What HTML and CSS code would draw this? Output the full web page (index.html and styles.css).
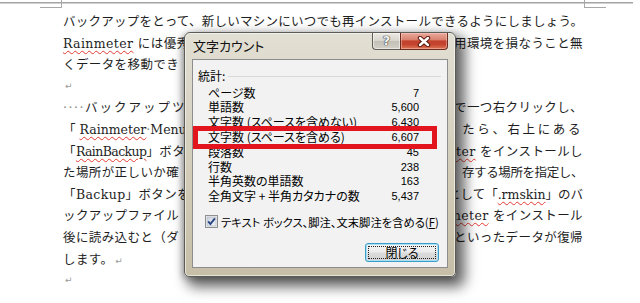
FILE: index.html
```html
<!DOCTYPE html>
<html lang="ja">
<head>
<meta charset="utf-8">
<title>文字カウント</title>
<link rel="stylesheet" href="styles.css">
</head>
<body>
<div class="page">
  <div class="top"><span class="mark mark-l"></span><span class="mark mark-r"></span></div>
  <div class="doc">
    <p class="ln full">バックアップをとって、新しいマシンにいつでも再インストールできるようにしましょう。</p>
    <p class="ln"><span><span class="sp">Rainmeter</span> には優秀</span><span>用環境を損なうこと無</span></p>
    <p class="ln"><span>くデータを移動でき</span></p>
    <p class="ln"><span class="pm">↵</span></p>
    <p class="ln"><span><span class="dots">····</span><span class="wide">バックアップツ</span></span><span>で一つ右クリックし、</span></p>
    <p class="ln"><span class="plain">「 <span class="sp">Rainmeter</span><span class="mk">·</span>Menu</span><span class="wider">たら、右上にある</span></p>
    <p class="ln"><span>「<span class="sp narrow">RainBackup</span>」ボタ</span><span><span class="sp">eter</span> をインストールし</span></p>
    <p class="ln"><span>た場所が正しいか確</span><span class="tight">存する場所を指定し、</span></p>
    <p class="ln"><span>「Backup」ボタンを</span><span class="plain">として「<span class="sp">.rmskin</span>」のバ</span></p>
    <p class="ln"><span>ックアップファイル</span><span><span class="sp">meter</span> をインストール</span></p>
    <p class="ln"><span>後に読み込むと（ダ</span><span>といったデータが復帰</span></p>
    <p class="ln"><span>します。<span class="pm">↵</span></span></p>
    <p class="ln"><span class="pm">↵</span></p>
  </div>

  <div class="dlg">
    <div class="dlg-title">
      <span class="dlg-caption">文字カウント</span>
      <div class="caps">
        <span class="cap help">?</span>
        <span class="cap close"><svg width="14" height="11" viewBox="0 0 14 11"><path d="M3 2 L11 9 M11 2 L3 9" stroke="#5a1a10" stroke-width="4.4" stroke-linecap="round"/><path d="M3 2 L11 9 M11 2 L3 9" stroke="#ffffff" stroke-width="2.4" stroke-linecap="round"/></svg></span>
      </div>
    </div>
    <div class="dlg-body">
      <div class="grp"><span>統計:</span><span class="grp-line"></span></div>
      <dl class="stats">
        <div class="row"><dt>ページ数</dt><dd>7</dd></div>
        <div class="row"><dt>単語数</dt><dd>5,600</dd></div>
        <div class="row"><dt>文字数 (スペースを含めない)</dt><dd>6,430</dd></div>
        <div class="row"><dt>文字数 (スペースを含める)</dt><dd>6,607</dd></div>
        <div class="row"><dt>段落数</dt><dd>45</dd></div>
        <div class="row"><dt>行数</dt><dd>238</dd></div>
        <div class="row"><dt>半角英数の単語数</dt><dd>163</dd></div>
        <div class="row"><dt>全角文字 + 半角カタカナの数</dt><dd>5,437</dd></div>
      </dl>
      <div class="chk">
        <span class="box"><svg width="13" height="13" viewBox="0 0 13 13"><defs><linearGradient id="cg" x1="0" y1="0" x2="1" y2="1"><stop offset="0" stop-color="#c9d2de"/><stop offset="1" stop-color="#f4f6f9"/></linearGradient></defs><rect x="0.5" y="0.5" width="12" height="12" fill="#f6f6f6" stroke="#8e8f8f"/><rect x="2" y="2" width="9" height="9" fill="url(#cg)" stroke="#b3bac4" stroke-width="0.8"/><path d="M3.2 6.4 L5.4 9 L9.9 3.3" fill="none" stroke="#2a4583" stroke-width="1.9"/></svg></span>
        <span>テキスト ボックス、脚注、文末脚注を含める(<u>F</u>)</span>
      </div>
      <div class="btns"><button class="btn" type="button">閉じる</button></div>
      <div class="hl"></div>
    </div>
  </div>
</div>
</body>
</html>
```
FILE: styles.css
```css
html, body {
  margin: 0;
  padding: 0;
  background: #ffffff;
}

.page {
  position: relative;
  width: 640px;
  height: 303px;
  overflow: hidden;
  background: #ffffff;
}

.top {
  display: flex;
  justify-content: space-between;
  height: 11px;
  padding: 0 34px 0 40px;
  box-sizing: border-box;
  background: linear-gradient(#a4a4a4, #a4a4a4) 0 2px / 633px 1px no-repeat,
              linear-gradient(#d0d0d0, #d0d0d0) 0 3px / 633px 1px no-repeat;
}

.mark {
  width: 22px;
  height: 8px;
  box-sizing: border-box;
  border-bottom: 1px solid #a8a8a8;
}

.mark-l { border-right: 1px solid #a8a8a8; }
.mark-r { border-left: 1px solid #a8a8a8; }

.doc {
  padding: 0 57px 0 63px;
  font-family: "DejaVu Serif", "Noto Sans CJK JP", serif;
  font-size: 12.5px;
  letter-spacing: 0.4px;
  color: #1e1e1e;
}

.ln {
  display: flex;
  justify-content: space-between;
  margin: 0;
  height: 21.6px;
  line-height: 21.6px;
  white-space: nowrap;
}

.ln.full {
  display: block;
  letter-spacing: 0;
  text-align: justify;
  text-align-last: justify;
  text-justify: inter-character;
  white-space: normal;
  overflow: hidden;
}

.wide { letter-spacing: 2px; }
.wider { letter-spacing: 2.6px; }
.tight { letter-spacing: -0.4px; }
.plain { letter-spacing: 0; }
.narrow { letter-spacing: -0.6px; }

.sp {
  text-decoration: underline wavy #e23a30;
  text-decoration-thickness: 1px;
  text-underline-offset: 2px;
}

.pm {
  font-family: "DejaVu Sans", sans-serif;
  font-size: 9px;
  letter-spacing: 0;
  color: #9a9a9a;
  margin-left: 2px;
}

.dots {
  display: inline-block;
  width: 22px;
  color: #8a8a8a;
  letter-spacing: 1.5px;
}

.mk {
  color: #8a8a8a;
}

/* dialog */
.dlg {
  position: absolute;
  left: 184px;
  top: 32px;
  width: 272px;
  box-sizing: border-box;
  padding: 0 7px 8px;
  border: 1px solid #5d5b55;
  border-radius: 6px 6px 5px 5px;
  background: linear-gradient(180deg, #e2dfd4 0%, #d9d4c5 30%, #cfc8b3 70%, #c6bea6 100%);
  box-shadow: inset 0 0 0 1px rgba(255, 255, 255, 0.55),
              6px 7px 13px 3px rgba(0, 0, 0, 0.6),
              -2px 2px 6px rgba(0, 0, 0, 0.25);
  font-family: "Noto Sans CJK JP", sans-serif;
  font-feature-settings: "palt";
  color: #000;
}

.dlg-title {
  display: flex;
  justify-content: space-between;
  align-items: flex-start;
  height: 26px;
}

.dlg-caption {
  font-size: 13px;
  line-height: 26px;
  padding-left: 1px;
  color: #111;
}

.caps {
  display: flex;
}

.cap {
  height: 17px;
  box-sizing: border-box;
  display: flex;
  align-items: center;
  justify-content: center;
  border: 1px solid #5e5d58;
  border-top: none;
}

.help {
  width: 28px;
  border-right: none;
  border-radius: 0 0 0 4px;
  background: linear-gradient(180deg, #ebe9e1 0%, #d7d5cc 48%, #c3c1b7 52%, #d2d0c6 100%);
  box-shadow: inset 0 0 0 1px rgba(255, 255, 255, 0.5);
  font-family: "DejaVu Sans", sans-serif;
  font-weight: bold;
  font-size: 13px;
  line-height: 16px;
  color: #f4f4f4;
  text-shadow: 0 0 1px #3c3c3c, 0 0 1px #3c3c3c, 0 0 1px #3c3c3c;
}

.close {
  width: 48px;
  border-color: #6a2a1e;
  border-radius: 0 0 4px 0;
  background: linear-gradient(180deg, #eaa99c 0%, #d98270 42%, #c3402b 50%, #c4452f 72%, #de7757 100%);
  box-shadow: inset 0 0 0 1px rgba(255, 210, 200, 0.45);
}

.dlg-body {
  position: relative;
  border: 1px solid #8d8d8d;
  background: #f2f2f2;
  padding: 9px 0 5px;
}

.grp {
  display: flex;
  align-items: center;
  height: 14px;
  line-height: 14px;
  padding-left: 5px;
  margin-bottom: 2.6px;
  font-size: 12px;
}

.grp-line {
  flex: 1;
  height: 1px;
  margin: 1px 6px 0 3px;
  background: #d9d9d9;
}

.stats {
  margin: 0;
  padding: 0 28px 0 15px;
}

.row {
  display: flex;
  justify-content: space-between;
  height: 14.8px;
  line-height: 14.8px;
  font-size: 12px;
}

.row dt,
.row dd {
  margin: 0;
  white-space: nowrap;
}

.row dd {
  font-family: "Liberation Sans", sans-serif;
  font-size: 11px;
}

.chk {
  display: flex;
  align-items: center;
  gap: 3px;
  height: 16px;
  margin-top: 10px;
  padding-left: 12px;
  font-size: 11.3px;
  white-space: nowrap;
}

.box {
  display: flex;
  width: 13px;
  height: 13px;
}

.chk u {
  text-underline-offset: 1px;
}

.btns {
  display: flex;
  justify-content: flex-end;
  margin-top: 13px;
  padding-right: 8px;
}

.btn {
  position: relative;
  width: 74px;
  height: 19px;
  padding: 0;
  border: 1px solid #3f9cc6;
  border-radius: 3px;
  background: linear-gradient(180deg, #f4f4f4 0%, #ececec 48%, #dcdcdc 52%, #d2d2d2 100%);
  box-shadow: inset 0 0 0 1px #a8e0f5;
  font-family: "Noto Sans CJK JP", sans-serif;
  font-feature-settings: "palt";
  font-size: 12px;
  line-height: 17px;
  color: #000;
}

.btn::after {
  content: "";
  position: absolute;
  inset: 2px;
  border: 1px dotted #222;
}

.hl {
  position: absolute;
  left: 0;
  top: 66px;
  width: 244px;
  height: 23px;
  box-sizing: border-box;
  border: 5px solid #e2141d;
}
```
